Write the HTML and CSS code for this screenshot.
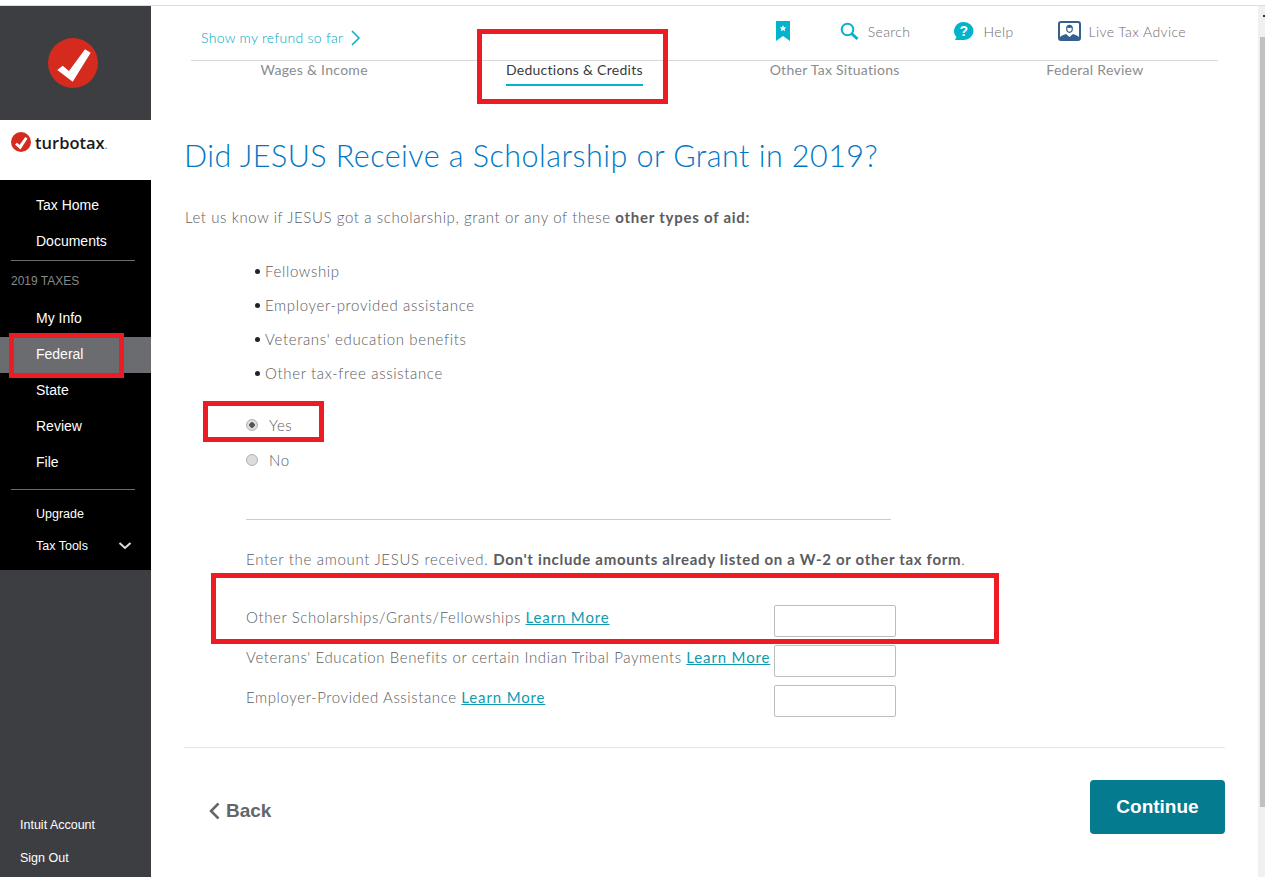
FILE: index.html
```html
<!DOCTYPE html>
<html lang="en">
<head>
    <meta charset="UTF-8">
    <title>TurboTax - Scholarship or Grant</title>
    <link rel="stylesheet" href="styles.css">
</head>
<body>
    <div class="top-line"></div>
    <div class="app">
        <aside class="sidebar">
            <div class="logo-box">
                <svg width="50" height="50" viewBox="0 0 50 50"><circle cx="25" cy="25" r="25" fill="#d52b1e"/><path d="M9.300 32l5.400-4.300 6.300 5.300 16-21.700 5.700 3.400-18 29z" fill="#fff"/></svg>
            </div>
            <div class="brand">
                <svg width="20" height="20" viewBox="0 0 20 20"><circle cx="10" cy="10" r="10" fill="#d52b1e"/><path d="M4 12.500l2-1.700 2.500 2.100 5.800-7.900 2.200 1.400-7 11z" fill="#fff"/></svg>
                <span class="brand-name">turbotax<span class="brand-dot">.</span></span>
            </div>
            <nav class="nav-black">
                <a class="nav-item" href="#">Tax Home</a>
                <a class="nav-item" href="#">Documents</a>
                <div class="nav-rule"></div>
                <div class="nav-label">2019 TAXES</div>
                <a class="nav-item" href="#">My Info</a>
                <a class="nav-item active" href="#">Federal</a>
                <a class="nav-item" href="#">State</a>
                <a class="nav-item" href="#">Review</a>
                <a class="nav-item" href="#">File</a>
                <div class="nav-rule lower"></div>
                <a class="nav-item small" href="#">Upgrade</a>
                <a class="nav-item small tools" href="#">Tax Tools
                    <svg width="14" height="8" viewBox="0 0 14 8"><path d="M1.500 1l5.500 5 5.500-5" fill="none" stroke="#ddd" stroke-width="2"/></svg>
                </a>
            </nav>
            <div class="account">
                <a href="#">Intuit Account</a>
                <a href="#">Sign Out</a>
            </div>
        </aside>

        <main class="content">
            <header class="top-bar">
                <a class="refund" href="#">Show my refund so far
                    <svg width="10" height="16" viewBox="0 0 10 16"><path d="M1 1l7 7-7 7" fill="none" stroke="#00b2c8" stroke-width="1.500"/></svg>
                </a>
                <div class="tools-links">
                    <a class="tool bookmark" href="#">
                        <svg width="14" height="20" viewBox="0 0 14 20"><path d="M0 0h14v20l-7-5-7 5z" fill="#00b4cb"/><path d="M7 4l1 2.200 2.300.2-1.700 1.600.5 2.300L7 9.100l-2.100 1.200.5-2.300-1.700-1.600L6 6.200z" fill="#fff"/></svg>
                    </a>
                    <a class="tool search" href="#">
                        <svg width="19" height="19" viewBox="0 0 19 19"><circle cx="7.500" cy="7.500" r="5.800" fill="none" stroke="#00b4cb" stroke-width="2"/><path d="M11.500 11.500l6 5.500" stroke="#00b4cb" stroke-width="3"/></svg>
                        Search
                    </a>
                    <a class="tool help" href="#">
                        <svg width="20" height="19" viewBox="0 0 20 19"><path d="M10 0a9.500 9 0 0 1 0 18H1l1.500-3A9.500 9 0 0 1 10 0z" fill="#00b4cb"/><text x="10" y="14" class="help-mark">?</text></svg>
                        Help
                    </a>
                    <a class="tool advice" href="#">
                        <svg width="23" height="20" viewBox="0 0 23 20"><rect x="1" y="1" width="21" height="18" rx="2" fill="#fff" stroke="#33608f" stroke-width="2"/><ellipse cx="11.500" cy="7.800" rx="2.800" ry="3.500" fill="#fff" stroke="#33608f" stroke-width="1.200"/><path d="M8.500 6.500c.5-2.500 5.500-2.500 6 0-2 .5-4 .5-6 0z" fill="#33608f"/><path d="M2 19v-3c2-2 5-2.500 6-3l3.500 3 3.500-3c1 .5 4 1 6 3v3z" fill="#33608f"/></svg>
                        Live Tax Advice
                    </a>
                </div>
            </header>

            <ul class="steps">
                <li>Wages &amp; Income</li>
                <li class="current"><span>Deductions &amp; Credits</span></li>
                <li>Other Tax Situations</li>
                <li>Federal Review</li>
            </ul>

            <h1>Did JESUS Receive a Scholarship or Grant in 2019?</h1>
            <p class="intro">Let us know if JESUS got a scholarship, grant or any of these <b>other types of aid:</b></p>

            <ul class="aid-list">
                <li>Fellowship</li>
                <li>Employer-provided assistance</li>
                <li>Veterans' education benefits</li>
                <li>Other tax-free assistance</li>
            </ul>

            <div class="question">
                <label class="radio-row"><span class="radio checked"></span>Yes</label>
                <label class="radio-row"><span class="radio"></span>No</label>
                <div class="divider"></div>
                <p class="amount-note">Enter the amount JESUS received. <b>Don't include amounts already listed on a W-2 or other tax form</b>.</p>
                <div class="amount-row">
                    <span class="amount-label">Other Scholarships/Grants/Fellowships <a href="#">Learn More</a></span>
                    <input type="text" class="amount-input">
                </div>
                <div class="amount-row">
                    <span class="amount-label">Veterans' Education Benefits or certain Indian Tribal Payments <a href="#">Learn More</a></span>
                    <input type="text" class="amount-input">
                </div>
                <div class="amount-row">
                    <span class="amount-label">Employer-Provided Assistance <a href="#">Learn More</a></span>
                    <input type="text" class="amount-input">
                </div>
            </div>

            <footer class="actions">
                <a class="back" href="#">
                    <svg width="12" height="18" viewBox="0 0 12 18"><path d="M10.500 1.500L3 9l7.500 7.500" fill="none" stroke="#63666a" stroke-width="2.500"/></svg>
                    Back
                </a>
                <button class="continue">Continue</button>
            </footer>
        </main>

        <div class="scrollbar"><div class="thumb"></div></div>
    </div>

    <!-- red markup drawn over the screenshot -->
    <div class="mark mark-tab"></div>
    <div class="mark mark-federal"></div>
    <div class="mark mark-yes"></div>
    <div class="mark mark-amount"></div>
</body>
</html>
```

FILE: styles.css
```css
* {
    box-sizing: border-box;
}
html, body {
    height: 100%;
}
body {
    margin: 0;
    overflow: hidden;
    background: #fff;
    color: #63666a;
    font-family: "Open Sans", "Liberation Sans", sans-serif;
    font-size: 14px;
}
a {
    text-decoration: none;
    color: inherit;
}
.top-line {
    height: 6px;
    border-bottom: 1px solid #ddd;
}
.app {
    display: flex;
    height: 871px;
}

/* sidebar */
.sidebar {
    width: 151px;
    flex: none;
    display: flex;
    flex-direction: column;
    background: #3c3e42;
    font-family: "Liberation Sans", Arial, sans-serif;
}
.logo-box {
    height: 114px;
    display: flex;
    align-items: center;
    justify-content: center;
    padding-right: 5px;
}
.brand {
    height: 60px;
    background: #fff;
    display: flex;
    align-items: center;
    gap: 4px;
    padding: 0 0 16px 11px;
}
.brand-name {
    color: #1a1a1a;
    font-family: "Open Sans", sans-serif;
    font-weight: 600;
    font-size: 16.500px;
}
.brand-dot {
    color: #888;
    font-size: 10px;
}
.nav-black {
    background: #000;
    height: 390px;
    padding-top: 8px;
}
.nav-item {
    display: block;
    height: 36px;
    line-height: 34px;
    padding-left: 36px;
    color: #fff;
    font-size: 14px;
}
.nav-item.active {
    background: #6b6c70;
}
.nav-item.small {
    height: 32px;
    line-height: 32px;
    font-size: 12.500px;
}
.nav-item.tools {
    display: flex;
    justify-content: space-between;
    align-items: center;
    padding-right: 19px;
}
.nav-rule {
    height: 1px;
    margin: 0 16px 0 11px;
    background: #6b6c70;
}
.nav-rule.lower {
    margin-top: 8px;
    margin-bottom: 8px;
}
.nav-label {
    height: 40px;
    line-height: 40px;
    padding-left: 11px;
    font-size: 12px;
    color: #86888b;
}
.account {
    margin-top: auto;
    padding: 0 0 2px 20px;
    color: #fff;
    font-size: 12.500px;
}
.account a {
    display: block;
    height: 33px;
    line-height: 33px;
}

/* main column */
.content {
    flex: 1;
    min-width: 0;
    padding: 0 33px;
}
.top-bar {
    height: 55px;
    margin: 0 7px;
    padding: 0 10px;
    display: flex;
    justify-content: space-between;
    align-items: flex-start;
    border-bottom: 1px solid #d8d8d8;
    font-weight: 300;
}
.refund {
    display: flex;
    align-items: center;
    gap: 8px;
    margin-top: 23px;
    color: #00a6bd;
    font-size: 14px;
    letter-spacing: .3px;
    font-family: Lato, sans-serif;
}
.tools-links {
    display: flex;
    align-items: center;
    margin: 15px 22px 0 0;
}
.tool {
    display: flex;
    align-items: center;
    gap: 9px;
    font-family: Lato, sans-serif;
    font-size: 14px;
    letter-spacing: .4px;
    color: #6b6c72;
}
.search {
    margin-left: 50px;
}
.help, .advice {
    margin-left: 44px;
}
.advice {
    gap: 8px;
}
.help-mark {
    fill: #fff;
    font-family: "Liberation Sans", sans-serif;
    font-size: 14px;
    font-weight: 700;
    text-anchor: middle;
}
.steps {
    list-style: none;
    margin: 0;
    padding: 0;
    height: 28px;
    display: grid;
    grid-template-columns: repeat(4, 1fr);
    line-height: 18px;
    text-align: center;
    font-family: Lato, sans-serif;
    font-size: 14px;
    letter-spacing: .28px;
    color: #8a8c90;
}
.steps .current {
    color: #393a3d;
}
.steps .current span {
    display: inline-block;
    height: 25px;
    border-bottom: 2px solid #00b4cb;
}
h1 {
    margin: 46px 0 0;
    color: #0077c5;
    font-family: Lato, sans-serif;
    font-size: 30.500px;
    font-weight: 300;
    line-height: 40px;
    letter-spacing: .46px;
}
.intro {
    margin: 32px 0 0;
    padding-left: 1px;
    color: #5a5c60;
    font-family: Lato, sans-serif;
    font-size: 15px;
    line-height: 20px;
    font-weight: 300;
    letter-spacing: .6px;
}
.intro b {
    letter-spacing: .75px;
}
.intro b, .amount-note b {
    font-weight: 700;
}
.aid-list {
    list-style: none;
    margin: 27px 0 0;
    padding: 0 0 0 71px;
    color: #5a5c60;
    font-family: Lato, sans-serif;
    font-size: 15px;
    font-weight: 300;
    letter-spacing: .65px;
}
.aid-list li {
    height: 34px;
    line-height: 34px;
    display: flex;
    align-items: center;
    gap: 5px;
}
.aid-list li::before {
    content: "";
    width: 5px;
    height: 5px;
    border-radius: 50%;
    background: #222;
}
.question {
    margin: 17px 0 0 62px;
    color: #5a5c60;
    font-family: Lato, sans-serif;
    font-size: 15px;
    font-weight: 300;
    letter-spacing: .6px;
}
.radio-row {
    display: flex;
    align-items: center;
    gap: 11px;
    height: 35px;
}
.radio {
    width: 12px;
    height: 12px;
    border-radius: 50%;
    border: 1px solid #b0b0b0;
    background: #ddd;
}
.radio.checked {
    background: radial-gradient(circle, #555 0 2.500px, #ddd 3px);
}
.divider {
    width: 645px;
    height: 1px;
    margin-top: 42px;
    background: #ccc;
}
.amount-note {
    margin: 29px 0 36px;
    line-height: 20px;
    letter-spacing: .69px;
}
.amount-row {
    display: flex;
    height: 40px;
}
.amount-label {
    width: 528px;
    padding-top: 2px;
    line-height: 20px;
    white-space: nowrap;
}
.amount-label a {
    color: #0d9bb0;
    text-decoration: underline;
    font-weight: 400;
    letter-spacing: .85px;
}
.amount-input {
    width: 122px;
    height: 32px;
    border: 1px solid #bdbdbd;
    border-radius: 2px;
    background: #fff;
}
.actions {
    margin-top: 22px;
    border-top: 1px solid #e6e6e6;
    height: 90px;
    display: flex;
    justify-content: space-between;
    align-items: flex-start;
    font-family: "Liberation Sans", Arial, sans-serif;
}
.back {
    display: flex;
    align-items: center;
    gap: 6px;
    margin: 52px 0 0 24px;
    color: #63666a;
    font-size: 19px;
    font-weight: 700;
}
.continue {
    width: 135px;
    height: 54px;
    margin-top: 32px;
    border: none;
    border-radius: 4px;
    background: #047b8e;
    color: #fff;
    font-family: inherit;
    font-size: 19px;
    font-weight: 700;
}

/* window scrollbar */
.scrollbar {
    width: 7px;
    flex: none;
    margin-left: auto;
    background: #f0f0f0;
    padding-top: 31px;
}
.scrollbar::before {
    content: "";
    position: absolute;
    top: 15px;
    right: 0;
    width: 2px;
    height: 2px;
    background: #333;
}
.thumb {
    height: 770px;
    margin-left: 2px;
    background: #c0c0c0;
}

/* red markup */
.mark {
    position: absolute;
    border: 5px solid #ed1c24;
}
.mark-tab {
    left: 477px;
    top: 29px;
    width: 191px;
    height: 75px;
}
.mark-federal {
    left: 9px;
    top: 333px;
    width: 115px;
    height: 45px;
}
.mark-yes {
    left: 203px;
    top: 401px;
    width: 121px;
    height: 41px;
}
.mark-amount {
    left: 211px;
    top: 573px;
    width: 788px;
    height: 71px;
}
```
